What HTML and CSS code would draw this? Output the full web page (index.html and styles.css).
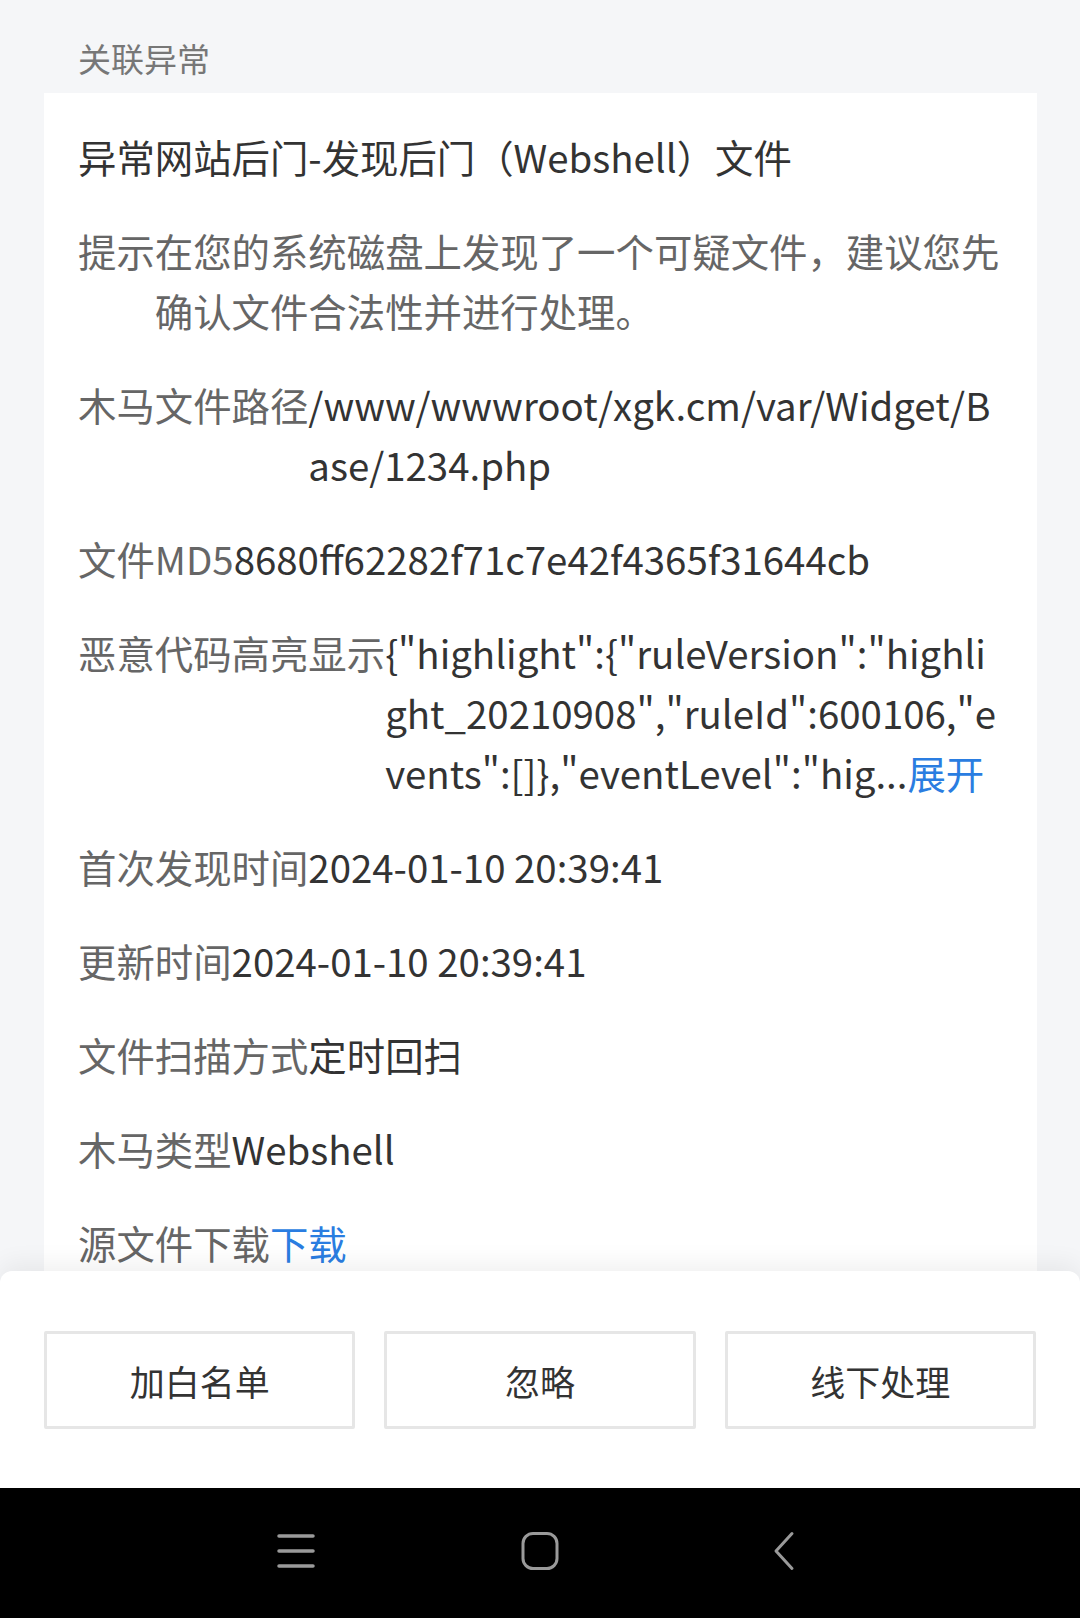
FILE: index.html
```html
<!DOCTYPE html>
<html lang="zh-CN">
<head>
    <meta charset="UTF-8">
    <meta name="viewport" content="width=device-width, initial-scale=1.0">
    <title>关联异常</title>
    <link rel="stylesheet" href="styles.css">
</head>
<body>
    <div class="page">
        <div class="content">
            <div class="section-title">关联异常</div>
            <div class="card">
                <div class="row title">异常网站后门-发现后门（Webshell）文件</div>
                <div class="row">
                    <span class="label">提示</span>
                    <span class="value label-color">在您的系统磁盘上发现了一个可疑文件，建议您先确认文件合法性并进行处理。</span>
                </div>
                <div class="row">
                    <span class="label">木马文件路径</span>
                    <span class="value">/www/wwwroot/xgk.cm/var/Widget/Base/1234.php</span>
                </div>
                <div class="row">
                    <span class="label">文件MD5</span>
                    <span class="value">8680ff62282f71c7e42f4365f31644cb</span>
                </div>
                <div class="row">
                    <span class="label">恶意代码高亮显示</span>
                    <span class="value">{"highlight":{"ruleVersion":"highlight_20210908","ruleId":600106,"events":[]},"eventLevel":"hig...<a class="link">展开</a></span>
                </div>
                <div class="row">
                    <span class="label">首次发现时间</span>
                    <span class="value">2024-01-10 20:39:41</span>
                </div>
                <div class="row">
                    <span class="label">更新时间</span>
                    <span class="value">2024-01-10 20:39:41</span>
                </div>
                <div class="row">
                    <span class="label">文件扫描方式</span>
                    <span class="value">定时回扫</span>
                </div>
                <div class="row">
                    <span class="label">木马类型</span>
                    <span class="value">Webshell</span>
                </div>
                <div class="row">
                    <span class="label">源文件下载</span>
                    <span class="value"><a class="link">下载</a></span>
                </div>
            </div>
        </div>

        <div class="sheet">
            <button class="btn">加白名单</button>
            <button class="btn">忽略</button>
            <button class="btn">线下处理</button>
        </div>

        <div class="navbar">
            <svg class="nav-icon" viewBox="0 0 40 40" width="40" height="40">
                <path d="M3 5h34M3 20h34M3 35h34" stroke="#9a9a9a" stroke-width="3.5" stroke-linecap="round" fill="none"/>
            </svg>
            <svg class="nav-icon" viewBox="0 0 40 40" width="40" height="40">
                <rect x="3" y="2.5" width="34" height="35" rx="10" stroke="#9a9a9a" stroke-width="3" fill="none"/>
            </svg>
            <svg class="nav-icon" viewBox="0 0 40 40" width="40" height="40">
                <path d="M28 2.5L12 20l16 17.5" stroke="#9a9a9a" stroke-width="3" stroke-linecap="round" stroke-linejoin="round" fill="none"/>
            </svg>
        </div>
    </div>
</body>
</html>
```

FILE: styles.css
```css
body {
    margin: 0;
    background-color: #f5f6f8;
    font-family: "Noto Sans CJK SC", "Noto Sans", sans-serif;
    color: #333;
}
.page {
    height: 100vh;
    display: flex;
    flex-direction: column;
    overflow: hidden;
}
.content {
    flex: 1;
    overflow: hidden;
    padding: 0 43px 0 44px;
}
.section-title {
    padding: 36px 0 0 34px;
    margin-bottom: 12px;
    font-size: 33px;
    line-height: 45px;
    color: #777;
}
.card {
    background-color: white;
    padding: 33px 32px 33px 34px;
    display: flex;
    flex-direction: column;
    gap: 34px;
}
.row {
    display: flex;
    font-size: 38.4px;
    line-height: 60px;
}
.row.title {
    color: #333;
}
.label {
    flex: none;
    color: #666;
}
.value {
    flex: 1;
    min-width: 0;
    word-break: break-all;
    color: #333;
}
.value.label-color {
    color: #666;
}
.link {
    color: #2a7de1;
}
.sheet {
    position: relative;
    z-index: 1;
    background-color: white;
    border-radius: 12px 12px 0 0;
    box-shadow: 0 -8px 24px rgba(0,0,0,0.06);
    padding: 60px 44px 59px 44px;
    display: flex;
    gap: 29px;
}
.btn {
    flex: 1;
    height: 98px;
    background-color: white;
    border: 3px solid #e6e6e6;
    border-radius: 2px;
    font-family: inherit;
    font-size: 35px;
    color: #333;
    padding: 0;
}
.navbar {
    height: 130px;
    background-color: black;
    display: flex;
    justify-content: center;
    align-items: center;
    gap: 204px;
    padding-bottom: 4px;
    box-sizing: border-box;
}
.nav-icon {
    display: block;
}
```
